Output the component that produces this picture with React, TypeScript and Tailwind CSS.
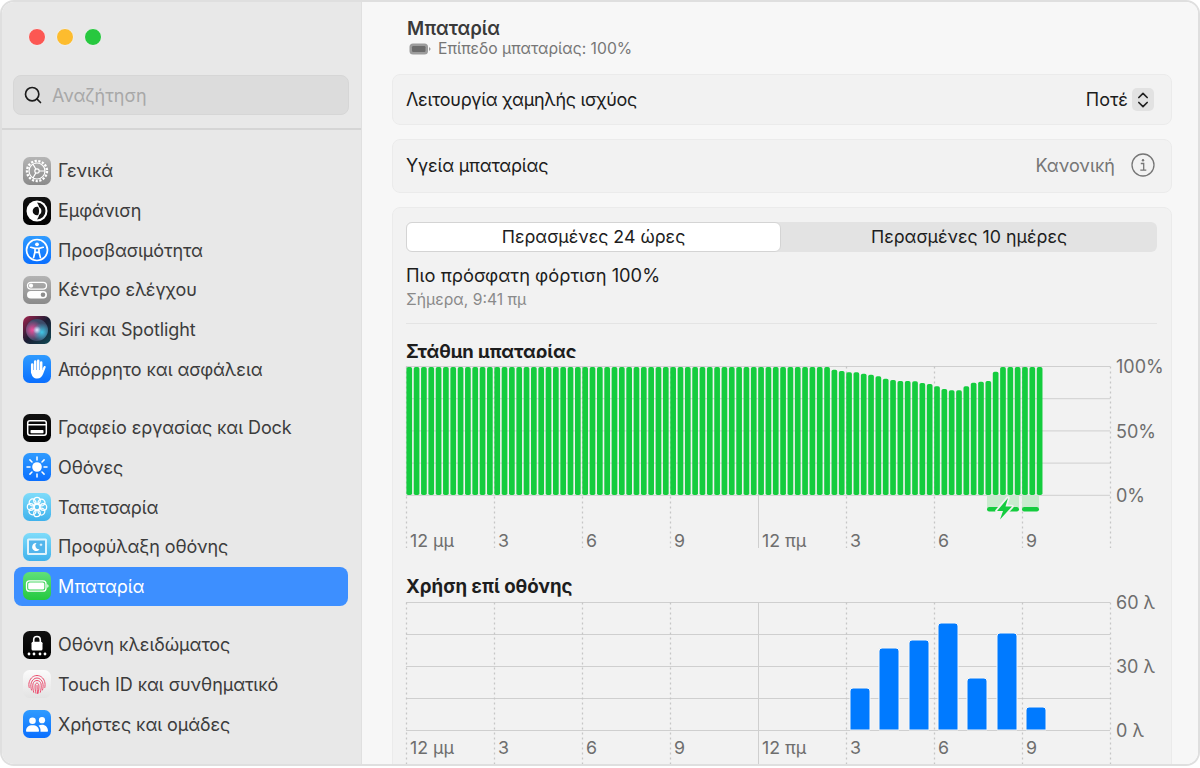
import { Search, ChevronsUpDown } from "lucide-react";
import type { ReactNode } from "react";

// battery level: px below the top of the chart, for the bars where it dips (the rest are full)
const batteryDrops = [0, 0, 2.7, 4, 5.3, 5.3, 6.7, 7.7, 9.3, 11.7, 13, 14, 14, 14.3, 16, 17, 19.3, 22, 23.3, 23.3, 19.3, 15.7, 14.7, 14, 4.7];
const fullBars = 87 - batteryDrops.length - 6;
const levels = [...Array(fullBars).fill(0), ...batteryDrops, ...Array(6).fill(0)];

const usageBars = [
  { x: 444, top: 92 },
  { x: 473, top: 52 },
  { x: 503, top: 44 },
  { x: 532, top: 27 },
  { x: 561, top: 82 },
  { x: 591, top: 37 },
  { x: 620, top: 111 },
];

const hourLabels = ["12 μμ", "3", "6", "9", "12 πμ", "3", "6", "9"];

function Tile({ from, to, children }: { from: string; to: string; children: ReactNode }) {
  const id = `tile-${from.slice(1)}-${to.slice(1)}`;
  return (
    <svg viewBox="0 0 28 28" className="w-7 h-7 shrink-0">
      <defs>
        <linearGradient id={id} x1="0" y1="0" x2="0" y2="1">
          <stop offset="0" stopColor={from} />
          <stop offset="1" stopColor={to} />
        </linearGradient>
      </defs>
      <rect x="0" y="0" width="28" height="28" rx="6.5" fill={`url(#${id})`} />
      {children}
    </svg>
  );
}

const GeneralIcon = () => (
  <Tile from="#b5b5b5" to="#8b8b8b">
    <circle cx="14" cy="14" r="10" fill="none" stroke="#fff" strokeWidth="2.4" strokeDasharray="2.2 1.5" />
    <circle cx="14" cy="14" r="8" fill="none" stroke="#fff" strokeWidth="1.2" />
    <circle cx="14" cy="14" r="2.2" fill="none" stroke="#fff" strokeWidth="1.2" />
    <path d="M16.2 14H22M12.9 12.1 9.9 7M12.9 15.9 9.9 21" stroke="#fff" strokeWidth="1.2" fill="none" />
  </Tile>
);

const AppearanceIcon = () => (
  <Tile from="#111111" to="#000000">
    <circle cx="14" cy="14" r="10.5" fill="#fff" />
    <path d="M14 5.500a8.500 8.500 0 0 1 0 17c2-2.500 2.500-5.500 2.500-8.500S16 8 14 5.500Z" fill="#111" />
    <circle cx="14" cy="14" r="4.300" fill="#111" />
    <path d="M15 9.800a4.300 4.300 0 0 1 0 8.400c.8-1.300 1-2.800 1-4.200s-.2-2.900-1-4.200Z" fill="#fff" />
  </Tile>
);

const AccessibilityIcon = () => (
  <Tile from="#2f9bff" to="#0a6fff">
    <circle cx="14" cy="14" r="10.500" fill="none" stroke="#fff" strokeWidth="1.700" />
    <circle cx="14" cy="8.300" r="1.900" fill="#fff" />
    <path d="M7.800 11.300 12 12.400v3.600L10.600 21.600M20.200 11.300 16 12.400v3.600l1.400 5.600M12 12.400h4M12.200 16.300h3.600" stroke="#fff" strokeWidth="1.700" strokeLinecap="round" strokeLinejoin="round" fill="none" />
  </Tile>
);

const ControlIcon = () => (
  <Tile from="#b3b3b3" to="#8a8a8a">
    <rect x="4.500" y="6.300" width="19" height="6.800" rx="3.400" fill="none" stroke="#fff" strokeWidth="1.300" />
    <circle cx="8" cy="9.700" r="2.100" fill="#fff" />
    <rect x="4" y="15" width="20" height="7.600" rx="3.800" fill="#fff" />
    <circle cx="20" cy="18.800" r="2.300" fill="#8d8d8d" />
  </Tile>
);

const SiriIcon = () => (
  <svg viewBox="0 0 28 28" className="w-7 h-7 shrink-0">
    <defs>
      <radialGradient id="siri-a" cx="0.3" cy="0.5" r="0.45">
        <stop offset="0" stopColor="#ef4f9b" />
        <stop offset="1" stopColor="#ef4f9b" stopOpacity="0" />
      </radialGradient>
      <radialGradient id="siri-b" cx="0.72" cy="0.6" r="0.42">
        <stop offset="0" stopColor="#3fc7e6" />
        <stop offset="1" stopColor="#3fc7e6" stopOpacity="0" />
      </radialGradient>
      <radialGradient id="siri-c" cx="0.5" cy="0.5" r="0.18">
        <stop offset="0" stopColor="#dfe6ff" />
        <stop offset="1" stopColor="#dfe6ff" stopOpacity="0" />
      </radialGradient>
      <linearGradient id="siri-bg" x1="0" y1="0" x2="1" y2="1">
        <stop offset="0" stopColor="#a5234f" />
        <stop offset="0.5" stopColor="#1b1d33" />
        <stop offset="1" stopColor="#0f4a55" />
      </linearGradient>
    </defs>
    <rect width="28" height="28" rx="6.500" fill="url(#siri-bg)" />
    <circle cx="14" cy="14" r="11" fill="#3c4a68" />
    <circle cx="14" cy="14" r="11" fill="url(#siri-a)" />
    <circle cx="14" cy="14" r="11" fill="url(#siri-b)" />
    <circle cx="14" cy="14" r="11" fill="url(#siri-c)" />
  </svg>
);

const HandIcon = () => (
  <Tile from="#2f9bff" to="#0a6fff">
    <path d="M9.200 9.500v8M12.200 6.500v9M15.200 5.800v9.700M18.200 7.500v8.500" stroke="#fff" strokeWidth="2.500" strokeLinecap="round" fill="none" />
    <path d="M8 15h11.500v-1.200l1.300-2.300c.8-1.100 2.400-.3 1.800 1l-2.500 6.500c-1 2.600-2.800 4.500-5.800 4.500-3.300 0-5.800-2-5.800-5.500Z" fill="#fff" />
  </Tile>
);

const DockIcon = () => (
  <Tile from="#111111" to="#000000">
    <rect x="4.700" y="6.700" width="18.600" height="14.600" rx="2.200" fill="none" stroke="#fff" strokeWidth="1.500" />
    <rect x="5" y="10" width="18" height="1.500" fill="#fff" />
    <rect x="7.500" y="16" width="13" height="3.200" rx="0.800" fill="#fff" />
  </Tile>
);

const DisplayIcon = () => (
  <Tile from="#2f9bff" to="#0a6fff">
    <circle cx="14" cy="14" r="4.800" fill="#fff" />
    <path d="M14 4v3M14 21v3M4 14h3M21 14h3M6.900 6.900 9 9M19 19l2.100 2.100M6.900 21.100 9 19M19 9l2.100-2.100" stroke="#fff" strokeWidth="1.500" strokeLinecap="round" />
  </Tile>
);

const WallpaperIcon = () => (
  <Tile from="#7fdcfa" to="#3fb2ec">
    {[0, 45, 90, 135, 180, 225, 270, 315].map((a) => (
      <circle key={a} cx="14" cy="7.600" r="3.300" fill="none" stroke="#fff" strokeWidth="1.200" transform={`rotate(${a} 14 14)`} />
    ))}
    <circle cx="14" cy="14" r="2.800" fill="none" stroke="#fff" strokeWidth="1.200" />
  </Tile>
);

const ScreenSaverIcon = () => (
  <Tile from="#7fdcfa" to="#3fb2ec">
    <rect x="4" y="5.500" width="20" height="16.500" rx="1.500" fill="#dff3fc" />
    <rect x="6" y="7.500" width="16" height="12.500" fill="#52b5ec" />
    <path d="M13.500 10a4 4 0 1 0 3 6.200 3.600 3.600 0 0 1-3-6.200Z" fill="#fff" />
    <path d="M18 10.500v2.600M16.700 11.800h2.600" stroke="#fff" strokeWidth="0.900" />
  </Tile>
);

const BatteryTile = () => (
  <Tile from="#5fe07a" to="#25c93f">
    <rect x="3.500" y="8.800" width="19.500" height="10.400" rx="3" fill="none" stroke="#fff" strokeWidth="1.300" />
    <rect x="5.200" y="10.500" width="16.100" height="7" rx="1.600" fill="#fff" />
    <path d="M24.300 12.200c.9.300 1.200 1 1.200 1.800s-.3 1.500-1.200 1.800Z" fill="#fff" />
  </Tile>
);

const LockIcon = () => (
  <Tile from="#111111" to="#000000">
    <path d="M10.700 11V8.800a3.300 3.300 0 0 1 6.600 0V11" fill="none" stroke="#fff" strokeWidth="1.600" />
    <rect x="8.500" y="10.800" width="11" height="8.700" rx="1.500" fill="#fff" />
    {[6, 11, 17, 22].map((x) => (
      <circle key={x} cx={x} cy="23" r="1.400" fill="#fff" />
    ))}
  </Tile>
);

const TouchIcon = () => (
  <Tile from="#fbfbfb" to="#e3e3e3">
    <g fill="none" stroke="#ec4d6f" strokeWidth="1" strokeLinecap="round">
      <path d="M6.200 17.500c-.5-2 -.5-4 .2-6C7.600 7.900 10.500 5.500 14 5.500s6.500 2.400 7.600 6c.6 2 .6 4 .2 6" />
      <path d="M8.500 20c-.7-2.500-1-5-.2-7.200C9.100 10.200 11.300 8 14 8s4.900 2.200 5.700 4.800c.7 2.200.5 5-.2 7.200" />
      <path d="M10.700 22.300c-.8-3-1.300-6-.7-8.500.5-2 2-3.300 4-3.300s3.500 1.300 4 3.300c.6 2.500.1 5.500-.7 8.500" />
      <path d="M13 23.300c-.8-3-1.200-5.800-.8-8.200.2-1.100.9-2 1.800-2s1.600.9 1.800 2c.4 2.400 0 5.200-.8 8.200" />
      <path d="M14 15.500c0 2.800.3 5.200.6 8" />
    </g>
  </Tile>
);

const UsersIcon = () => (
  <Tile from="#2f9bff" to="#0a6fff">
    <circle cx="9.500" cy="10.700" r="3.300" fill="#fff" />
    <circle cx="19" cy="10.200" r="3.100" fill="#fff" />
    <path d="M3 21c0-3.800 2.700-5.800 6.500-5.800S16 17.200 16 21c0 .5-.3.800-.8.800H3.800c-.5 0-.8-.3-.8-.8Z" fill="#fff" />
    <path d="M17.500 21.800h6.700c.5 0 .8-.3.800-.8 0-3.500-2.500-6.200-6-6.200-1.400 0-2.600.4-3.500 1 1.500 1.300 2.300 3.300 2 6Z" fill="#fff" />
  </Tile>
);

const groups = [
  [
    { label: "Γενικά", icon: <GeneralIcon /> },
    { label: "Εμφάνιση", icon: <AppearanceIcon /> },
    { label: "Προσβασιμότητα", icon: <AccessibilityIcon /> },
    { label: "Κέντρο ελέγχου", icon: <ControlIcon /> },
    { label: "Siri και Spotlight", icon: <SiriIcon /> },
    { label: "Απόρρητο και ασφάλεια", icon: <HandIcon /> },
  ],
  [
    { label: "Γραφείο εργασίας και Dock", icon: <DockIcon /> },
    { label: "Οθόνες", icon: <DisplayIcon /> },
    { label: "Ταπετσαρία", icon: <WallpaperIcon /> },
    { label: "Προφύλαξη οθόνης", icon: <ScreenSaverIcon /> },
    { label: "Μπαταρία", icon: <BatteryTile />, active: true },
  ],
  [
    { label: "Οθόνη κλειδώματος", icon: <LockIcon /> },
    { label: "Touch ID και συνθηματικό", icon: <TouchIcon /> },
    { label: "Χρήστες και ομάδες", icon: <UsersIcon /> },
  ],
];

function Sidebar() {
  return (
    <aside className="w-[360px] shrink-0 bg-[#e8e8e8] border-r border-[#e0e0e0] flex flex-col">
      <div className="flex gap-[10px] pl-[26px] pt-[26px]">
        <span className="w-[18px] h-[18px] rounded-full bg-[#fc5753] border border-[#f0f0f0]" />
        <span className="w-[18px] h-[18px] rounded-full bg-[#fdbc2e] border border-[#f0f0f0]" />
        <span className="w-[18px] h-[18px] rounded-full bg-[#27c83f] border border-[#f0f0f0]" />
      </div>
      <div className="ml-[11px] mr-[12px] mt-[29px] h-[40px] flex items-center gap-[9px] pl-[9px] rounded-lg bg-[#dcdcdc] border border-[#d6d6d6]">
        <Search size={20} strokeWidth={2} className="text-[#1c1c1c]" />
        <span className="text-[18px] text-[#a8a8a8]">Αναζήτηση</span>
      </div>
      <div className="mt-[13px] h-[2px] bg-[#d5d5d5]" />
      <nav className="pl-3 pr-[13px] pt-[21px] flex flex-col gap-[18.7px]">
        {groups.map((group, i) => (
          <div key={i} className="flex flex-col">
            {group.map((item) => (
              <div
                key={item.label}
                className={
                  item.active
                    ? "h-[39.7px] flex items-center gap-[7px] pl-[9px] rounded-lg bg-[#3d8fff] text-white"
                    : "h-[39.7px] flex items-center gap-[7px] pl-[9px] text-[#3c3c3c]"
                }
              >
                {item.icon}
                <span className="text-[18px] tracking-[-0.1px] whitespace-nowrap">{item.label}</span>
              </div>
            ))}
          </div>
        ))}
      </nav>
    </aside>
  );
}

function Card({ children, className }: { children: ReactNode; className: string }) {
  return <div className={`ml-[30px] mr-[26px] bg-[#f2f2f2] border border-[#ebebeb] rounded-lg ${className}`}>{children}</div>;
}

// shared grid of the two charts; top = first horizontal line in svg coordinates
function ChartGrid({ top, bottom, step }: { top: number; bottom: number; step: number }) {
  return (
    <g>
      {[0, 1, 2, 3, 4].map((i) => (
        <line key={i} x1="0" x2="704" y1={top + i * step} y2={top + i * step} stroke="#cfcfcf" strokeWidth="1" />
      ))}
      {[0, 1, 2, 3, 4, 5, 6, 7, 8].map((i) =>
        i === 4 ? (
          <line key={i} x1={i * 88 + 0.5} x2={i * 88 + 0.5} y1={top} y2={bottom} stroke="#cfcfcf" strokeWidth="1" />
        ) : (
          <line key={i} x1={i * 88 + 0.5} x2={i * 88 + 0.5} y1={top} y2={bottom} stroke="#c6c6c6" strokeWidth="1.300" strokeDasharray="2 3" />
        ),
      )}
    </g>
  );
}

function HourLabels({ y }: { y: number }) {
  return (
    <g>
      {hourLabels.map((label, i) => (
        <text key={i} x={i * 88 + 4} y={y} className="fill-[#6e6e6e] text-[17.8px]">
          {label}
        </text>
      ))}
    </g>
  );
}

function BatteryChart() {
  return (
    <svg viewBox="0 0 766 190" className="block w-[766px] h-[190px] mt-[2px] overflow-visible">
      <ChartGrid top={6.5} bottom={188} step={32.2} />
      {levels.map((drop, i) => (
        <rect key={i} x={0.4 + i * 7.33} y={7 + drop} width="5.700" height={128 - drop} rx="1.800" fill="#14cc3e" />
      ))}
      <rect x="581" y="135.500" width="32" height="12" fill="#c9ebce" />
      <rect x="616" y="135.500" width="17" height="12" fill="#c9ebce" />
      <rect x="581" y="147" width="32" height="4.500" rx="2.200" fill="#14cc3e" />
      <rect x="616" y="147" width="17" height="4.500" rx="2.200" fill="#14cc3e" />
      <path d="M602 138 591 151h6l-3 8.500 12-13h-6.500l2.500-8.500Z" fill="#14cc3e" stroke="#f2f2f2" strokeWidth="3.500" paintOrder="stroke" strokeLinejoin="round" />
      <HourLabels y={187} />
      <text x="710" y="13" className="fill-[#6e6e6e] text-[18px]">100%</text>
      <text x="710" y="77.500" className="fill-[#6e6e6e] text-[18px]">50%</text>
      <text x="710" y="141.500" className="fill-[#6e6e6e] text-[18px]">0%</text>
    </svg>
  );
}

function UsageChart() {
  return (
    <svg viewBox="0 0 766 170" className="block w-[766px] h-[170px] overflow-visible">
      <ChartGrid top={6.5} bottom={170} step={32} />
      {usageBars.map((bar) => (
        <path
          key={bar.x}
          d={`M${bar.x} 134V${bar.top + 3}a3 3 0 0 1 3-3h14a3 3 0 0 1 3 3V134Z`}
          fill="#007aff"
          stroke="#f7f7f7"
          strokeWidth="1"
        />
      ))}
      <HourLabels y={158} />
      <text x="710" y="13" className="fill-[#6e6e6e] text-[18px]">60 λ</text>
      <text x="710" y="77" className="fill-[#6e6e6e] text-[18px]">30 λ</text>
      <text x="710" y="141" className="fill-[#6e6e6e] text-[18px]">0 λ</text>
    </svg>
  );
}

function InfoIcon() {
  return (
    <svg viewBox="0 0 24 24" className="w-6 h-6">
      <circle cx="12" cy="12" r="11" fill="none" stroke="#767676" strokeWidth="1.300" />
      <circle cx="12" cy="7.300" r="1.200" fill="#767676" />
      <path d="M9.800 10.500h2.900v6.500M9.300 17.200h6" fill="none" stroke="#767676" strokeWidth="1.300" />
    </svg>
  );
}

function BatteryGlyph() {
  return (
    <svg viewBox="0 0 22 12" className="w-[22px] h-3">
      <rect x="0.500" y="0.500" width="18.500" height="11" rx="3.500" fill="#9c9c9c" />
      <rect x="3" y="3" width="13.500" height="6" rx="1.200" fill="#6c6c6c" />
      <path d="M20 4.200c1 .3 1.500 1 1.500 1.800s-.5 1.500-1.500 1.800Z" fill="#9c9c9c" />
    </svg>
  );
}

export default function App() {
  return (
    <div className="w-[1200px] h-[768px] bg-white overflow-hidden font-['Inter',sans-serif]">
      <div className="h-[766px] flex overflow-hidden rounded-[14px] border-2 border-[#dfdfdf]">
        <Sidebar />
        <main className="flex-1 bg-[#f7f7f7] overflow-hidden">
          <div className="pl-[45px] pt-[15px] h-[70px]">
            <h1 className="text-[18.6px] leading-[22px] font-semibold text-[#3a3a3a]">Μπαταρία</h1>
            <div className="flex items-center gap-[7px] pl-[2px] h-[20px]">
              <BatteryGlyph />
              <span className="text-[15.7px] text-[#767676]">Επίπεδο μπαταρίας: 100%</span>
            </div>
          </div>
          <Card className="mt-[2px] h-[51px] pl-[13px] pr-[17px] flex items-center justify-between">
            <span className="text-[18px] tracking-[-0.32px] text-[#1d1d1d]">Λειτουργία χαμηλής ισχύος</span>
            <div className="flex items-center gap-[4px]">
              <span className="text-[18px] text-[#1d1d1d]">Ποτέ</span>
              <span className="w-[22px] h-[23px] rounded-[5px] bg-[#e2e2e2] flex items-center justify-center">
                <ChevronsUpDown size={20} strokeWidth={2} className="text-[#222]" />
              </span>
            </div>
          </Card>
          <Card className="mt-[14px] h-[54px] pl-[13px] pr-[16px] pb-[2px] flex items-center justify-between">
            <span className="text-[18px] tracking-[-0.2px] text-[#1d1d1d]">Υγεία μπαταρίας</span>
            <div className="flex items-center gap-[16px]">
              <span className="text-[18px] text-[#767676]">Κανονική</span>
              <InfoIcon />
            </div>
          </Card>
          <Card className="mt-[14px] h-[620px] pl-[13px] pt-[14px]">
            <div className="w-[751px] h-[30px] flex rounded-md bg-[#e3e3e3]">
              <div className="w-[375px] rounded-md bg-white border border-[#d4d4d4] flex items-center justify-center text-[17.8px] text-[#1d1d1d]">
                Περασμένες 24 ώρες
              </div>
              <div className="flex-1 flex items-center justify-center text-[17.8px] text-[#1d1d1d]">
                Περασμένες 10 ημέρες
              </div>
            </div>
            <p className="mt-[12px] text-[18.3px] leading-[22px] text-[#1d1d1d]">Πιο πρόσφατη φόρτιση 100%</p>
            <p className="mt-[5px] text-[15.7px] leading-[18px] text-[#8a8a8a]">Σήμερα, 9:41 πμ</p>
            <div className="mt-[14px] w-[751px] h-px bg-[#e4e4e4]" />
            <h2 className="mt-[16px] h-[18px] overflow-hidden text-[18.4px] leading-[22px] font-bold text-[#1d1d1d]">Στάθμη μπαταρίας</h2>
            <BatteryChart />
            <h2 className="mt-[25px] h-[21px] text-[18.7px] leading-[24px] font-bold text-[#1d1d1d]">Χρήση επί οθόνης</h2>
            <UsageChart />
          </Card>
        </main>
      </div>
    </div>
  );
}
